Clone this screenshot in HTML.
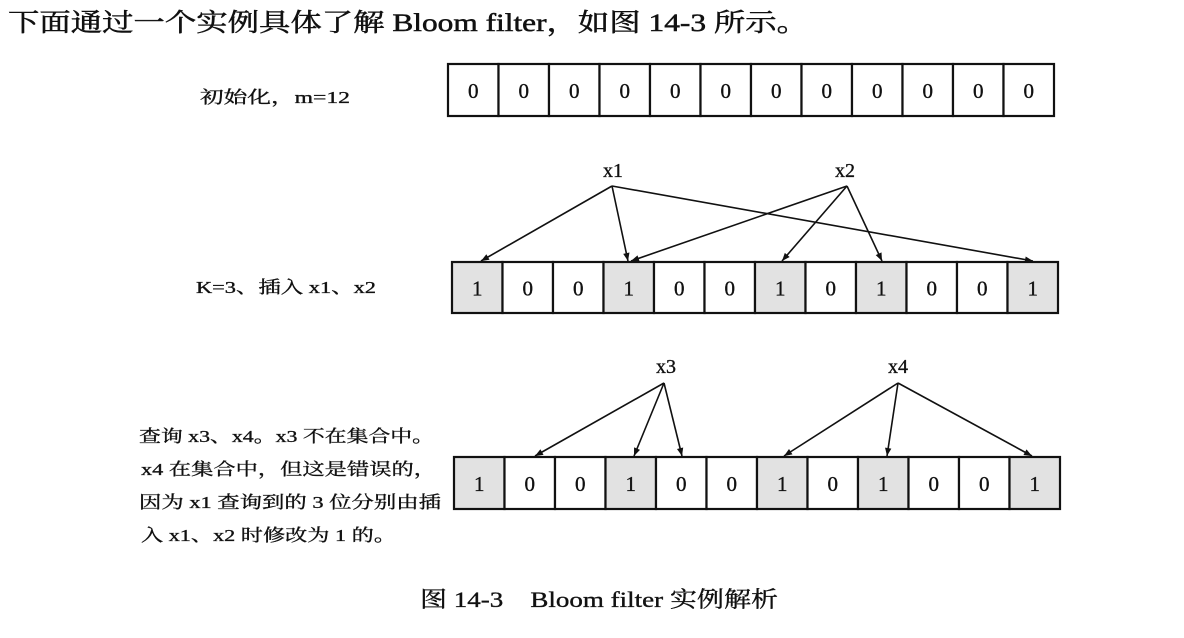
<!DOCTYPE html>
<html><head><meta charset="utf-8"><style>
html,body{margin:0;padding:0;background:#fff;}
svg{display:block}
text{fill:#111;stroke:#111;stroke-width:0.35}
.s{font-family:"Liberation Serif","Noto Serif CJK SC",serif;}
</style></head><body>
<svg width="1184" height="638" viewBox="0 0 1184 638" xmlns="http://www.w3.org/2000/svg">
<defs><marker id="a" viewBox="0 0 10 10" refX="10" refY="5" markerWidth="12" markerHeight="8" markerUnits="userSpaceOnUse" orient="auto"><path d="M0,1 L10,5 L0,9 z" fill="#111"/></marker></defs>
<text class="s" x="8" y="31" font-size="25" style="stroke-width:0.5" textLength="800" lengthAdjust="spacingAndGlyphs">下面通过一个实例具体了解 Bloom filter，如图 14-3 所示。</text>
<text class="s" x="200" y="103" font-size="17" textLength="150" lengthAdjust="spacingAndGlyphs">初始化，m=12</text>
<text class="s" x="196" y="293" font-size="17" textLength="180" lengthAdjust="spacingAndGlyphs">K=3、插入 x1、x2</text>
<text class="s" x="139" y="442" font-size="17" textLength="295" lengthAdjust="spacingAndGlyphs">查询 x3、x4。x3 不在集合中。</text>
<text class="s" x="141" y="475" font-size="17" textLength="295" lengthAdjust="spacingAndGlyphs">x4 在集合中，但这是错误的，</text>
<text class="s" x="139" y="508" font-size="17" textLength="302" lengthAdjust="spacingAndGlyphs">因为 x1 查询到的 3 位分别由插</text>
<text class="s" x="141" y="541" font-size="17" textLength="255" lengthAdjust="spacingAndGlyphs">入 x1、x2 时修改为 1 的。</text>
<text class="s" x="420" y="607" font-size="22" textLength="358" lengthAdjust="spacingAndGlyphs">图 14-3　Bloom filter 实例解析</text>
<g id="rows" stroke="#111" stroke-width="2.2" fill="none"></g>
<g font-family="Liberation Serif,serif" font-size="21" text-anchor="middle" id="nums"></g>
<g stroke="#111" stroke-width="1.6" fill="none" marker-end="url(#a)">
<line x1="612" y1="186" x2="481" y2="261"/>
<line x1="612" y1="186" x2="628" y2="261"/>
<line x1="612" y1="186" x2="1033" y2="261"/>
<line x1="847" y1="186" x2="631" y2="261"/>
<line x1="847" y1="186" x2="782" y2="261"/>
<line x1="847" y1="186" x2="882" y2="261"/>
<line x1="664" y1="383" x2="535" y2="456"/>
<line x1="664" y1="383" x2="634" y2="456"/>
<line x1="664" y1="383" x2="682" y2="456"/>
<line x1="898" y1="383" x2="784" y2="456"/>
<line x1="898" y1="383" x2="887" y2="456"/>
<line x1="898" y1="383" x2="1032" y2="456"/>
</g>
<g class="s" font-size="20"><text x="603" y="177">x1</text><text x="835" y="177">x2</text><text x="656" y="373">x3</text><text x="888" y="373">x4</text></g>
</svg>
<script>
const NS="http://www.w3.org/2000/svg";
const rows=[[448,64,52,[0,0,0,0,0,0,0,0,0,0,0,0]],[452,262,51,[1,0,0,1,0,0,1,0,1,0,0,1]],[454,457,52,[1,0,0,1,0,0,1,0,1,0,0,1]]];
const g=document.getElementById('rows'),n=document.getElementById('nums');
const w=50.5;
rows.forEach(([x,y,h,v])=>{
 v.forEach((b,i)=>{
  const r=document.createElementNS(NS,'rect');
  r.setAttribute('x',x+i*w);r.setAttribute('y',y);r.setAttribute('width',w);r.setAttribute('height',h);
  r.setAttribute('fill',b?'#e2e2e2':'#fff');g.appendChild(r);
  const t=document.createElementNS(NS,'text');
  t.setAttribute('x',x+i*w+w/2);t.setAttribute('y',y+h/2+8);t.textContent=b;n.appendChild(t);
 });
});
</script>
</body></html>
